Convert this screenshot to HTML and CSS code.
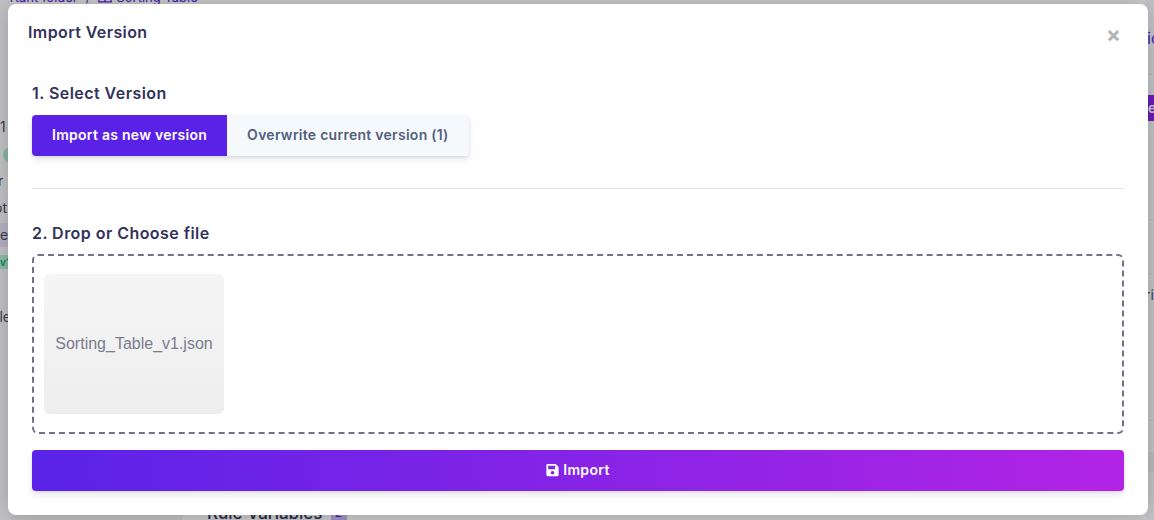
FILE: index.html
```html
<!DOCTYPE html>
<html lang="en">
<head>
  <meta charset="UTF-8">
  <title>Import Version</title>
  <link rel="stylesheet" href="styles.css">
</head>
<body>
  <!-- page behind the dialog, only the edges show -->
  <div class="page">
    <div class="crumbs">
      <span>Important folder</span>
      <span class="slash">/</span>
      <svg class="crumb-icon" viewBox="0 0 16 12" width="14" height="11"><path d="M1 1h14v10H1zM1 5h14M8 1v10" fill="none" stroke="currentColor" stroke-width="1.5"/></svg>
      <span>Sorting Table</span>
    </div>
    <div class="band-bottom"></div>
    <div class="page-right">
      <span class="scrap scrap-link">ic</span>
      <span class="scrap scrap-btn">er</span>
      <span class="scrap scrap-ri">ri</span>
      <i class="line line-a"></i>
      <i class="line line-b"></i>
      <i class="line line-c"></i>
      <i class="line line-d"></i>
      <i class="strip"></i>
    </div>
    <div class="page-left">
      <span class="scrap scrap-1">1</span>
      <i class="dot"></i>
      <span class="scrap scrap-r">r</span>
      <span class="scrap scrap-ot">ot</span>
      <span class="scrap scrap-e">e</span>
      <span class="scrap scrap-v">v1</span>
      <span class="scrap scrap-le">ole</span>
    </div>
    <div class="rule-vars">
      <span>Rule Variables</span>
      <span class="count">2</span>
    </div>
  </div>
  <div class="backdrop"></div>

  <div class="modal">
    <header class="modal-head">
      <h5 class="modal-title">Import Version</h5>
      <span class="close">&times;</span>
    </header>

    <section class="modal-body">
      <h6 class="step">1. Select Version</h6>
      <div class="tabs">
        <button class="tab active">Import as new version</button>
        <button class="tab">Overwrite current version (1)</button>
      </div>

      <hr class="divider">

      <h6 class="step">2. Drop or Choose file</h6>
      <div class="dropzone">
        <div class="file">Sorting_Table_v1.json</div>
      </div>

      <button class="import">
        <svg class="save-icon" viewBox="0 0 448 512" width="13" height="14"><path fill="currentColor" d="M433.900 129.900l-83.900-83.900A48 48 0 0 0 316.100 32H48C21.500 32 0 53.500 0 80v352c0 26.500 21.500 48 48 48h352c26.500 0 48-21.500 48-48V163.900a48 48 0 0 0-14.100-34zM224 416c-35.300 0-64-28.700-64-64 0-35.300 28.700-64 64-64s64 28.700 64 64c0 35.300-28.700 64-64 64zm96-304.500V212c0 6.600-5.400 12-12 12H76c-6.600 0-12-5.400-12-12V108c0-6.600 5.400-12 12-12h228.500c3.200 0 6.200 1.300 8.500 3.500l3.500 3.500c2.200 2.200 3.500 5.300 3.500 8.500z"/></svg>
        Import
      </button>
    </section>
  </div>
</body>
</html>
```

FILE: styles.css
```css
html {
  box-sizing: border-box;
}

*, *:before, *:after {
  box-sizing: inherit;
}

body {
  margin: 0;
  height: 520px;
  overflow: hidden;
  position: relative;
  font-family: Inter, "Liberation Sans", sans-serif;
  background: #fff;
}

/* page behind */
.page {
  position: absolute;
  inset: 0;
  overflow: hidden;
  font-size: 14px;
  color: #32325d;
}

.crumbs {
  position: absolute;
  top: -13px;
  left: -21px;
  display: flex;
  align-items: center;
  gap: 5px;
  font-size: 13px;
  line-height: 20px;
  color: #5a23e8;
}

.slash {
  margin: 0 3px;
}

.crumb-icon {
  margin-right: -1px;
}

.band-bottom {
  position: absolute;
  left: 183px;
  right: 0;
  top: 505px;
  height: 15px;
  background: #fcfcfd;
}

.band-bottom:before {
  content: "";
  position: absolute;
  top: 0;
  bottom: 0;
  left: -183px;
  width: 183px;
  background: #eeeef0;
}

.page-left,
.page-right {
  position: absolute;
  top: 0;
  bottom: 0;
}

.page-left {
  left: 0;
  width: 10px;
  background: #f5f5f9;
}

.page-right {
  right: 0;
  width: 8px;
  background: #f6f7fb;
}

.scrap {
  position: absolute;
  font-size: 14px;
  line-height: 18px;
  white-space: nowrap;
  color: #4a4f5f;
}

.scrap-link {
  top: 29px;
  left: 1px;
  font-size: 16px;
  color: #5a23e8;
}

.scrap-btn {
  top: 95px;
  left: 0;
  width: 8px;
  height: 26px;
  padding-left: 2px;
  line-height: 26px;
  font-weight: 600;
  color: #fff;
  background: #8a23e6;
}

.scrap-ri {
  top: 286px;
  left: -1px;
}

.scrap-1 { top: 118px; left: 0; }
.scrap-r { top: 172px; left: -2px; }
.scrap-ot { top: 199px; left: -6px; }
.scrap-le { top: 308px; left: -9px; }

.scrap-e {
  top: 223px;
  left: 0;
  width: 8px;
  height: 24px;
  line-height: 24px;
  background: #e6e1f8;
}

.scrap-v {
  top: 255px;
  left: 0;
  width: 9px;
  height: 14px;
  font-size: 10px;
  font-weight: 700;
  line-height: 14px;
  color: #1aae6f;
  background: #b0eed3;
  overflow: hidden;
}

.dot {
  position: absolute;
  top: 147px;
  left: 3px;
  width: 16px;
  height: 16px;
  border-radius: 50%;
  background: #a8e6cc;
}

.line {
  position: absolute;
  left: 0;
  right: 0;
  height: 1px;
  background: #e4e6ec;
}

.line-a { top: 74px; }
.line-b { top: 219px; }
.line-c { top: 273px; }
.line-d { top: 420px; }

.strip {
  position: absolute;
  left: 0;
  right: 0;
  top: 452px;
  height: 20px;
  background: #e9ecef;
}

.rule-vars {
  position: absolute;
  top: 502px;
  left: 207px;
  display: flex;
  align-items: center;
  gap: 8px;
  font-size: 17px;
  font-weight: 500;
  line-height: 22px;
}

.count {
  width: 16px;
  height: 22px;
  font-size: 11px;
  text-align: center;
  color: #5a23e8;
  background: #c9b8f5;
}

.backdrop {
  position: absolute;
  inset: 0;
  background: rgba(0, 0, 0, 0.2);
}

/* dialog */
.modal {
  position: absolute;
  top: 4px;
  left: 8px;
  width: 1140px;
  height: 511px;
  background: #fff;
  border-radius: 8px;
  box-shadow: 0 0 24px rgba(0, 0, 0, 0.22);
}

.modal-head {
  display: flex;
  justify-content: space-between;
  padding: 18px 27px 0 20px;
  height: 70px;
}

.modal-title {
  margin: 0;
  font-size: 16px;
  font-weight: 600;
  line-height: 21px;
  letter-spacing: 0.4px;
  color: #32325d;
}

.close {
  margin-top: 1px;
  font-size: 22px;
  font-weight: 700;
  line-height: 22px;
  color: #b3b3b3;
}

.modal-body {
  padding: 9px 24px 0;
}

.step {
  margin: 0;
  font-size: 16px;
  font-weight: 600;
  line-height: 21px;
  letter-spacing: 0.45px;
  color: #32325d;
}

.tabs {
  display: inline-flex;
  vertical-align: top;
  margin-top: 11px;
  border-radius: 4px;
  box-shadow: 0 4px 6px rgba(50, 50, 93, 0.11), 0 1px 3px rgba(0, 0, 0, 0.08);
}

.tab {
  height: 41px;
  padding: 0 20px 2px;
  border: 0;
  font-family: inherit;
  font-size: 14px;
  font-weight: 600;
  letter-spacing: 0.27px;
  color: #525f7f;
  background: #f6f9fc;
}

.tab:first-child {
  border-radius: 4px 0 0 4px;
}

.tab:last-child {
  border-radius: 0 4px 4px 0;
}

.tab.active {
  color: #fff;
  background: #5a22e6;
}

.divider {
  height: 1px;
  margin: 32px 0 34px;
  border: 0;
  background: #e6e6e9;
}

.dropzone {
  height: 180px;
  margin-top: 10px;
  padding: 18px 10px;
  border: 2px dashed #71718a;
  border-radius: 6px;
}

.file {
  display: flex;
  align-items: center;
  justify-content: center;
  width: 180px;
  height: 140px;
  border-radius: 6px;
  font-family: "Liberation Sans", Arial, sans-serif;
  font-size: 16px;
  color: #7b7b8e;
  background: linear-gradient(to bottom, #f5f5f5, #eeeeee);
}

.import {
  display: flex;
  align-items: center;
  justify-content: center;
  gap: 4px;
  width: 100%;
  height: 41px;
  margin-top: 16px;
  padding-bottom: 3px;
  border: 0;
  border-radius: 4px;
  font-family: inherit;
  font-size: 14px;
  font-weight: 600;
  letter-spacing: 0.35px;
  color: #fff;
  background: linear-gradient(87deg, #5a23e8, #b224e5);
  box-shadow: 0 4px 6px rgba(50, 50, 93, 0.11), 0 1px 3px rgba(0, 0, 0, 0.08);
}
```
